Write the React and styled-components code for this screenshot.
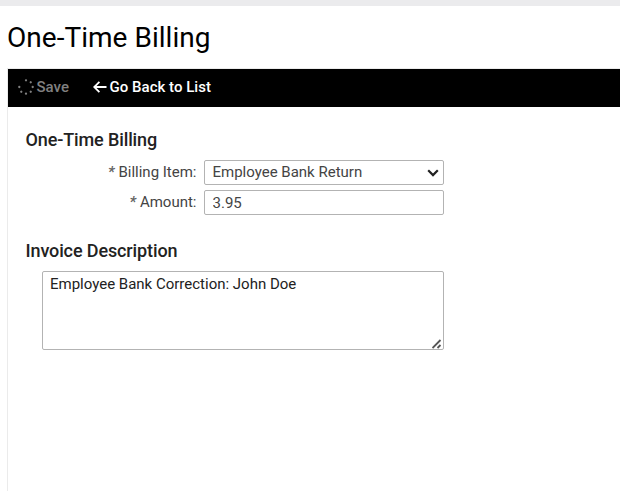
import { useState } from "react";
import styled, { createGlobalStyle } from "styled-components";

const App = () => {
  const [item, setItem] = useState("Employee Bank Return");
  const [amount, setAmount] = useState("3.95");
  const [description, setDescription] = useState(
    "Employee Bank Correction: John Doe"
  );

  return (
    <>
      <GlobalStyle />
      <TopStrip />
      <Title>One-Time Billing</Title>
      <Panel>
        <Toolbar>
          <ToolButton $disabled>
            <SpinnerIcon />
            Save
          </ToolButton>
          <ToolButton>
            <ArrowIcon />
            Go Back to List
          </ToolButton>
        </Toolbar>
        <Body>
          <SectionTitle>One-Time Billing</SectionTitle>
          <Fields>
            <Row>
              <Label htmlFor="item">
                <Required>*</Required> Billing Item:
              </Label>
              <SelectBox>
                <Select
                  id="item"
                  value={item}
                  onChange={(e) => setItem(e.target.value)}
                >
                  <option>Employee Bank Return</option>
                </Select>
                <Chevron viewBox="0 0 12 8">
                  <path d="M1.2 1.3 6 6.1l4.8-4.8" />
                </Chevron>
              </SelectBox>
            </Row>
            <Row>
              <Label htmlFor="amount">
                <Required>*</Required> Amount:
              </Label>
              <Input
                id="amount"
                value={amount}
                onChange={(e) => setAmount(e.target.value)}
              />
            </Row>
          </Fields>
          <SectionTitle>Invoice Description</SectionTitle>
          <TextBox>
            <TextArea
              spellCheck={false}
              value={description}
              onChange={(e) => setDescription(e.target.value)}
            />
            <Grip viewBox="0 0 10 10">
              <path d="M.5 9 8.5 1M5.5 9l3-3" />
            </Grip>
          </TextBox>
        </Body>
      </Panel>
    </>
  );
};

export default App;

//dots on a ring, the top left one is left out
const SpinnerIcon = () => (
  <Spinner viewBox="0 0 16 16">
    {[0, 45, 90, 135, 180, 225, 270].map((angle) => (
      <circle
        key={angle}
        cx="8"
        cy="1.3"
        r="1.15"
        transform={`rotate(${angle} 8 8)`}
      />
    ))}
  </Spinner>
);

const ArrowIcon = () => (
  <Arrow viewBox="0 0 14 12">
    <path d="M13.5 6H1.2M6.4.8 1.2 6l5.2 5.2" />
  </Arrow>
);

const GlobalStyle = createGlobalStyle`
  * {
    box-sizing: border-box;
  }

  body {
    margin: 0;
    background: #fff;
    font-family: Roboto, sans-serif;
    overflow: hidden;
  }

  #root {
    display: flex;
    flex-direction: column;
    height: 100vh;
  }
`;

const TopStrip = styled.div`
  height: 6px;
  flex-shrink: 0;
  background: #ebebed;
`;

const Title = styled.h1`
  margin: 0;
  padding: 15px 0 0 7px;
  height: 62px;
  flex-shrink: 0;
  font-size: 28px;
  line-height: 33px;
  font-weight: 400;
  letter-spacing: 0.03px;
  color: #000;
`;

const Panel = styled.main`
  flex: 1;
  margin-left: 7px;
  border-left: 1px solid #ebebeb;
  border-top: 1px solid #ebebeb;
`;

const Toolbar = styled.div`
  display: flex;
  align-items: center;
  gap: 23.5px;
  height: 38px;
  padding: 0 0 2px 10px;
  background: #000;
`;

const ToolButton = styled.button`
  display: flex;
  align-items: center;
  gap: 3px;
  padding: 0;
  border: none;
  background: none;
  font: 500 15px/18px Roboto, sans-serif;
  letter-spacing: 0.02px;
  color: ${({ $disabled }) => ($disabled ? "#808080" : "#fff")};
`;

const Spinner = styled.svg`
  width: 16px;
  height: 16px;
  margin-left: -0.5px;
  fill: currentColor;
`;

const Arrow = styled.svg`
  width: 14px;
  height: 12px;
  fill: none;
  stroke: currentColor;
  stroke-width: 1.8;
`;

const Body = styled.div`
  padding: 22px 0 0 18px;
`;

const SectionTitle = styled.h2`
  margin: 0 0 0 -0.5px;
  font-size: 18px;
  line-height: 22px;
  font-weight: 500;
  letter-spacing: -0.12px;
  color: #222;
`;

const Fields = styled.div`
  display: flex;
  flex-direction: column;
  gap: 5px;
  padding: 9px 0 25px;
`;

const Row = styled.div`
  display: flex;
  gap: 7.5px;
`;

const Label = styled.label`
  width: 170.5px;
  text-align: right;
  font-size: 15px;
  line-height: 24px;
  color: #444;
`;

const Required = styled.span`
  font-weight: 700;
  font-style: italic;
  color: #666;
`;

const SelectBox = styled.div`
  position: relative;
  width: 240px;
`;

const Input = styled.input`
  width: 240px;
  height: 25px;
  padding: 0 7px 0 7.5px;
  border: 1px solid #b3b3b3;
  border-radius: 2px;
  outline: none;
  background: #fff;
  font: 400 15px Roboto, sans-serif;
  color: #444;
`;

const Select = styled(Input).attrs({ as: "select" })`
  display: block;
  padding-bottom: 1px;
  appearance: none;
`;

const Chevron = styled.svg`
  position: absolute;
  right: 5px;
  top: 9px;
  width: 12px;
  height: 8px;
  fill: none;
  stroke: #222;
  stroke-width: 2.2;
  pointer-events: none;
`;

const TextBox = styled.div`
  position: relative;
  width: 402px;
  margin: 9px 0 0 16px;
`;

const TextArea = styled.textarea`
  display: block;
  width: 100%;
  height: 79px;
  padding: 3px 7px;
  border: 1px solid #b3b3b3;
  border-radius: 2px;
  outline: none;
  resize: none;
  font: 400 15px/18px Roboto, sans-serif;
  color: #222;
`;

const Grip = styled.svg`
  position: absolute;
  right: 2px;
  bottom: 1px;
  width: 10px;
  height: 10px;
  fill: none;
  stroke: #555;
  stroke-width: 1.8;
  pointer-events: none;
`;
